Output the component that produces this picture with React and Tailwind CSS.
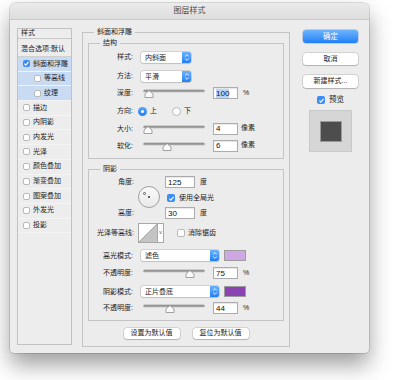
import React from "react";

const Check = ({ checked, size = "w-[8px] h-[8px]" }) =>
  checked ? (
    <div className={`${size} rounded-[2px] bg-[#3b8cf6] flex items-center justify-center shrink-0`}>
      <svg width="7" height="7" viewBox="0 0 8 8">
        <path d="M1.6 4.2 L3.2 5.8 L6.4 2.2" fill="none" stroke="#fff" strokeWidth="1.3" />
      </svg>
    </div>
  ) : (
    <div className={`${size} rounded-[2px] bg-white border border-[#b9b9b9] shrink-0`} />
  );

const Stepper = () => (
  <div className="w-[9px] h-full rounded-r-[2px] bg-linear-to-b from-[#6bb2fb] to-[#1f7ff5] flex items-center justify-center">
    <svg width="6" height="9" viewBox="0 0 6 9">
      <path d="M1.2 3.4 L3 1.6 L4.8 3.4 M1.2 5.6 L3 7.4 L4.8 5.6" fill="none" stroke="#fff" strokeWidth="0.9" />
    </svg>
  </div>
);

const Select = ({ text, w }) => (
  <div className={`${w} h-[11px] flex bg-white rounded-[2px] shadow-[0_0_0_0.5px_#b3b3b3,0_1px_1px_rgba(0,0,0,0.12)]`}>
    <span className="flex-1 pl-[4px] text-[7px] leading-[11px] text-[#222]">{text}</span>
    <Stepper />
  </div>
);

const Slider = ({ pos }) => (
  <svg width="62" height="12" viewBox="0 0 62 12" className="shrink-0">
    <line x1="1.5" y1="3" x2="60.5" y2="3" stroke="#a3a3a3" strokeWidth="2.6" strokeLinecap="round" />
    <line x1="1.5" y1="2.3" x2="60.5" y2="2.3" stroke="#8a8a8a" strokeWidth="0.8" strokeLinecap="round" />
    <path
      d={`M${pos - 4} 9.5 L${pos + 4} 9.5 L${pos + 4} 6 L${pos} 2.5 L${pos - 4} 6 Z`}
      fill="#fbfbfb"
      stroke="#8d8d8d"
      strokeWidth="0.8"
    />
  </svg>
);

const Input = ({ value, w = "w-[25px]", selected }) => (
  <div className={`${w} h-[12px] bg-white border border-[#acacac] shadow-[inset_0_1px_1px_rgba(0,0,0,0.1)] pl-[2px] flex items-center shrink-0`}>
    <span className={`text-[8px] leading-[9px] text-[#111] ${selected ? "bg-[#b5d5fd]" : ""}`}>{value}</span>
  </div>
);

const Label = ({ children, w = "w-[44px]" }) => (
  <span className={`${w} text-right text-[7px] leading-[12px] text-[#222] shrink-0`}>{children}</span>
);

const Swatch = ({ color }) => (
  <div className={`w-[22px] h-[11px] ml-[5px] border border-[#9c9c9c] ${color}`} />
);

const Btn = ({ children, className = "" }) => (
  <div
    className={`bg-white rounded-[3px] shadow-[0_0_0_0.5px_rgba(0,0,0,0.22),0_1px_1px_rgba(0,0,0,0.15)] text-[7px] text-[#222] flex items-center justify-center ${className}`}
  >
    {children}
  </div>
);

const Group = ({ title, className, children, left = "left-[10px]" }) => (
  <div className={`relative border border-[#c4c4c4] ${className}`}>
    <span className={`absolute -top-[6px] ${left} px-[3px] bg-[#ececec] text-[7px] leading-[10px] text-[#222]`}>{title}</span>
    {children}
  </div>
);

const StyleRow = ({ text, checked, sub, blue }) => (
  <div
    className={`h-[14.7px] flex items-center border-b border-[#f4f4f4] ${blue ? "bg-[#c8dbf3]" : ""} ${sub ? "pl-[16px]" : "pl-[5px]"}`}
  >
    <Check checked={checked} size="w-[7px] h-[7px]" />
    <span className="ml-[3px] text-[7px] text-[#222] whitespace-nowrap">{text}</span>
  </div>
);

export default function App() {
  return (
    <div className="w-[405px] h-[380px] bg-white pl-[10px] pt-[3px] font-['Liberation_Sans','Noto_Sans_CJK_SC',sans-serif]">
      <div className="w-[359px] h-[350px] bg-[#ececec] rounded-t-[5px] rounded-b-[4px] shadow-[0_12px_22px_rgba(0,0,0,0.38),0_0_0_0.5px_rgba(0,0,0,0.25)] flex flex-col">
        <div className="h-[17px] shrink-0 rounded-t-[5px] bg-linear-to-b from-[#ebebeb] to-[#dddddd] border-b border-[#c8c8c8] flex items-center justify-center text-[8px] text-[#4a4a4a]">
          图层样式
        </div>

        <div className="flex items-start pl-[7px] pt-[8px]">
          {/* left list */}
          <div className="w-[55px] h-[317px] border border-[#c2c2c2] bg-[#ededed] flex flex-col">
            <div className="h-[10px] pl-[3px] flex items-center text-[7px] text-[#222] border-b border-[#c8c8c8]">样式</div>
            <div className="h-[18px] pl-[3px] pt-[3px] flex items-center text-[7px] text-[#222] border-b border-[#d0d0d0] whitespace-nowrap">
              混合选项:默认
            </div>
            <StyleRow text="斜面和浮雕" checked blue />
            <StyleRow text="等高线" sub blue />
            <StyleRow text="纹理" sub blue />
            <StyleRow text="描边" />
            <StyleRow text="内阴影" />
            <StyleRow text="内发光" />
            <StyleRow text="光泽" />
            <StyleRow text="颜色叠加" />
            <StyleRow text="渐变叠加" />
            <StyleRow text="图案叠加" />
            <StyleRow text="外发光" />
            <StyleRow text="投影" />
          </div>

          {/* main */}
          <Group title="斜面和浮雕" className="ml-[10px] mt-[4px] w-[208px] h-[315px] pt-[10px] pl-[5px]" left="left-[11px]">
            <Group title="结构" className="w-[196px] h-[116px]" left="left-[11px]">
              <div className="flex items-center h-[12px] mt-[7px]">
                <Label>样式:</Label>
                <div className="ml-[8px]"><Select text="内斜面" w="w-[50px]" /></div>
              </div>
              <div className="flex items-center h-[12px] mt-[7px]">
                <Label>方法:</Label>
                <div className="ml-[8px]"><Select text="平滑" w="w-[50px]" /></div>
              </div>
              <div className="flex items-center h-[12px] mt-[5px]">
                <Label>深度:</Label>
                <div className="ml-[10px] mt-[2px]"><Slider pos={6} /></div>
                <div className="ml-[8px]"><Input value="100" selected /></div>
                <span className="ml-[5px] text-[7px] text-[#222]">%</span>
              </div>
              <div className="flex items-center h-[12px] mt-[6px]">
                <Label>方向:</Label>
                <div className="ml-[5px] w-[9px] h-[9px] rounded-full bg-linear-to-b from-[#5aa6fb] to-[#1d7ef5] flex items-center justify-center">
                  <div className="w-[3px] h-[3px] rounded-full bg-white" />
                </div>
                <span className="ml-[3px] text-[7px] text-[#222]">上</span>
                <div className="ml-[15px] w-[9px] h-[9px] rounded-full bg-white border border-[#b5b5b5]" />
                <span className="ml-[3px] text-[7px] text-[#222]">下</span>
              </div>
              <div className="flex items-center h-[13px] mt-[5px]">
                <Label>大小:</Label>
                <div className="ml-[10px] mt-[2px]"><Slider pos={5} /></div>
                <div className="ml-[8px]"><Input value="4" /></div>
                <span className="ml-[3px] text-[7px] text-[#222]">像素</span>
              </div>
              <div className="flex items-center h-[13px] mt-[4px]">
                <Label>软化:</Label>
                <div className="ml-[10px] mt-[2px]"><Slider pos={24} /></div>
                <div className="ml-[8px]"><Input value="6" /></div>
                <span className="ml-[3px] text-[7px] text-[#222]">像素</span>
              </div>
            </Group>

            <Group title="阴影" className="mt-[10px] w-[196px] h-[152px]" left="left-[11px]">
              <div className="flex items-start mt-[6px]">
                <div className="w-[45px] h-[43px] flex flex-col justify-between">
                  <Label w="w-[45px]">角度:</Label>
                  <Label w="w-[45px]">高度:</Label>
                </div>
                <div className="ml-[4px] mt-[10px] w-[22px] h-[22px] rounded-full border border-[#a0a0a0] bg-linear-to-b from-[#fafafa] to-[#e9e9e9] flex items-center justify-center relative">
                  <div className="w-[2px] h-[2px] rounded-full bg-[#333]" />
                  <div className="absolute left-[4px] top-[5px] w-[3px] h-[3px] rounded-full border-[0.8px] border-[#555] bg-white" />
                </div>
                <div className="ml-[5px] flex flex-col">
                  <div className="flex items-center h-[12px]">
                    <Input value="125" w="w-[30px]" />
                    <span className="ml-[5px] text-[7px] text-[#222]">度</span>
                  </div>
                  <div className="flex items-center h-[12px] mt-[4px] ml-[2px]">
                    <Check checked />
                    <span className="ml-[4px] text-[7px] text-[#222]">使用全局光</span>
                  </div>
                  <div className="flex items-center h-[12px] mt-[3px]">
                    <Input value="30" w="w-[30px]" />
                    <span className="ml-[5px] text-[7px] text-[#222]">度</span>
                  </div>
                </div>
              </div>

              <div className="flex items-center h-[20px] mt-[4px]">
                <Label w="w-[45px]">光泽等高线:</Label>
                <div className="ml-[4px] flex h-[20px]">
                  <div className="w-[20px] h-[20px] border border-[#a8a8a8] bg-white">
                    <svg width="18" height="18" viewBox="0 0 18 18">
                      <path d="M0 18 L18 0 L18 18 Z" fill="#c4c4c4" />
                      <path d="M0 18 L18 0" stroke="#8a8a8a" strokeWidth="0.7" />
                    </svg>
                  </div>
                  <div className="w-[6px] h-[20px] border border-l-0 border-[#a8a8a8] bg-white flex items-center justify-center text-[5px] text-[#444]">
                    v
                  </div>
                </div>
                <div className="ml-[13px]"><Check /></div>
                <span className="ml-[3px] text-[7px] text-[#222]">消除锯齿</span>
              </div>

              <div className="flex items-center h-[11px] mt-[7px]">
                <Label>高光模式:</Label>
                <div className="ml-[8px]"><Select text="滤色" w="w-[78px]" /></div>
                <Swatch color="bg-[#cfa7e2]" />
              </div>
              <div className="flex items-center h-[12px] mt-[6px]">
                <Label>不透明度:</Label>
                <div className="ml-[10px] mt-[2px]"><Slider pos={47} /></div>
                <div className="ml-[8px]"><Input value="75" /></div>
                <span className="ml-[5px] text-[7px] text-[#222]">%</span>
              </div>
              <div className="flex items-center h-[11px] mt-[7px]">
                <Label>阴影模式:</Label>
                <div className="ml-[8px]"><Select text="正片叠底" w="w-[78px]" /></div>
                <Swatch color="bg-[#8b43b3]" />
              </div>
              <div className="flex items-center h-[12px] mt-[5px]">
                <Label>不透明度:</Label>
                <div className="ml-[10px] mt-[2px]"><Slider pos={27} /></div>
                <div className="ml-[8px]"><Input value="44" /></div>
                <span className="ml-[5px] text-[7px] text-[#222]">%</span>
              </div>
            </Group>

            <div className="flex justify-center gap-[13px] mt-[7px] pr-[5px]">
              <Btn className="w-[56px] h-[11px]">设置为默认值</Btn>
              <Btn className="w-[56px] h-[11px]">复位为默认值</Btn>
            </div>
          </Group>

          {/* right column */}
          <div className="ml-[13px] mt-[2px] w-[55px] flex flex-col">
            <div className="h-[13px] rounded-[3px] bg-linear-to-b from-[#6db3fb] to-[#1b80f7] text-white text-[7.5px] flex items-center justify-center shadow-[0_0_0_0.5px_rgba(0,60,160,0.35)]">
              确定
            </div>
            <Btn className="h-[12px] mt-[10px] text-[7.5px]">取消</Btn>
            <Btn className="h-[13px] mt-[10px] text-[7.5px]">新建样式...</Btn>
            <div className="h-[12px] mt-[6px] flex items-center justify-center">
              <Check checked />
              <span className="ml-[4px] text-[7.5px] text-[#222]">预览</span>
            </div>
            <div className="mt-[4px] mx-auto w-[43px] h-[42px] bg-[#d6d6d6] border border-[#c9c9c9] flex items-center justify-center">
              <div className="w-[22px] h-[21px] bg-[#4d4d4d] border border-[#9a9a9a]" />
            </div>
          </div>
        </div>
      </div>
    </div>
  );
}
